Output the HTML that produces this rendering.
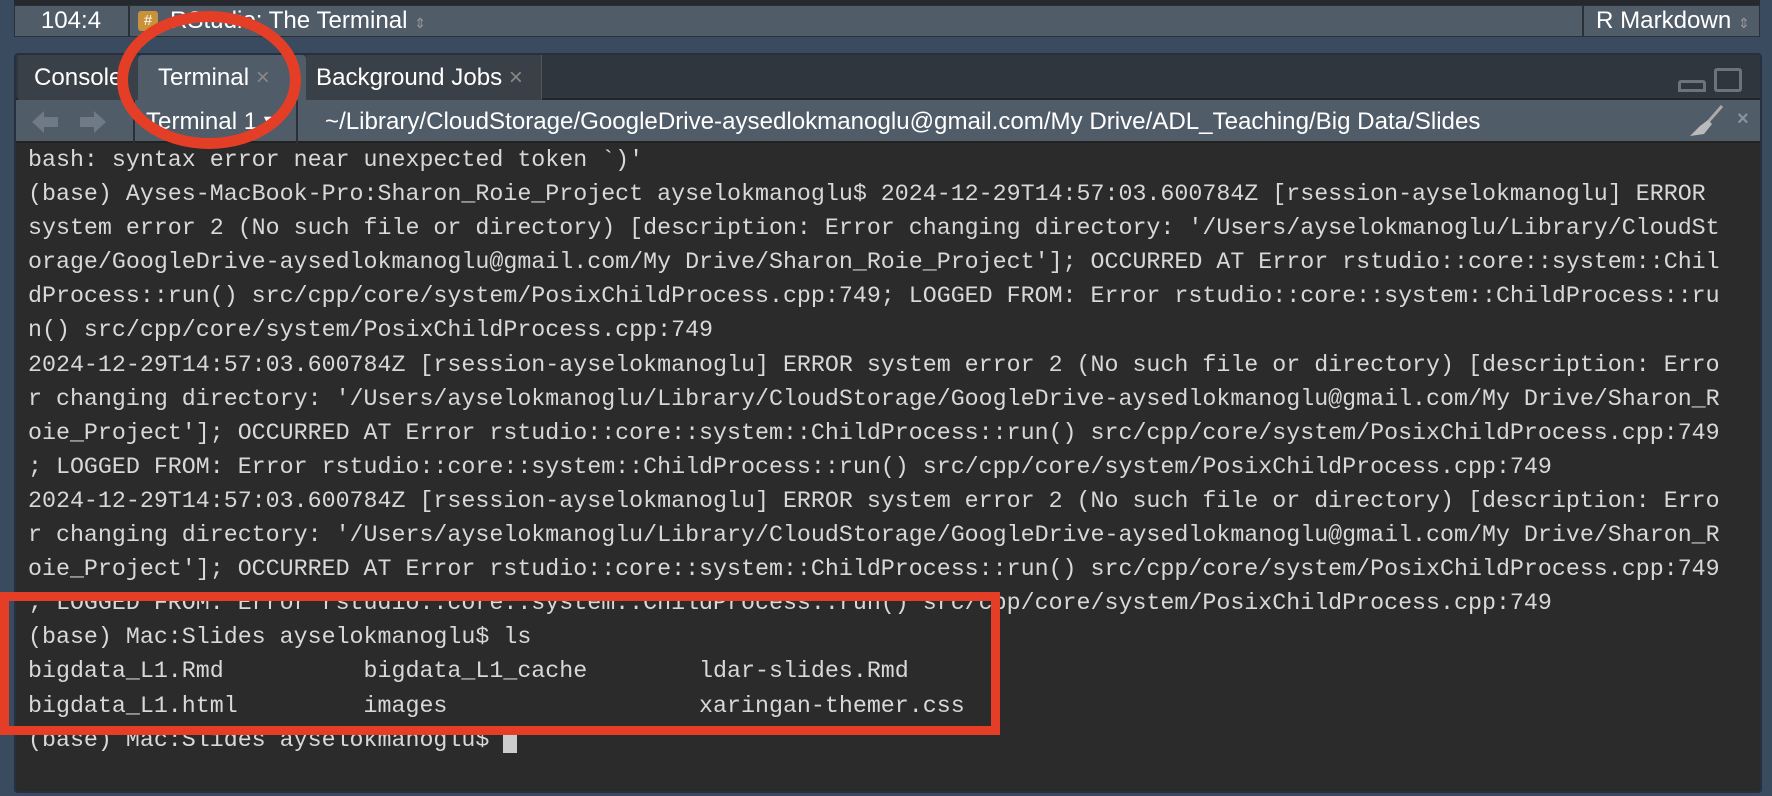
<!DOCTYPE html>
<html><head><meta charset="utf-8"><style>
body{margin:0;width:1772px;height:796px;background:#3a4a5f;position:relative;overflow:hidden;font-family:"Liberation Sans",sans-serif}
div{position:absolute;box-sizing:border-box}
.t{white-space:pre;font-family:"Liberation Mono",monospace;font-size:23.3px;color:#d8d8d8;line-height:34.1px}
.u{font-size:24.1px;color:#fff}
</style></head><body>
<div style="left:14px;top:0;width:1746px;height:5px;background:#262a2f"></div>
<div style="left:14px;top:5px;width:1746px;height:32px;background:#515c69;border:1px solid #2a3038"></div>
<div class="u" style="left:14px;top:5px;width:116px;height:32px;border-right:2px solid #2a3038;text-align:center;line-height:32px">104:4</div>
<div style="left:138px;top:11px;width:20px;height:20px;background:#c8923a;border-radius:3px;color:#fff;font-size:15px;text-align:center;line-height:20px">#</div>
<div class="u" style="left:170px;top:5px;line-height:32px">RStudio: The Terminal <span style="color:#999;font-size:14px">⇕</span></div>
<div class="u" style="left:1582px;top:5px;width:178px;height:32px;border-left:2px solid #2a3038;line-height:32px;padding-left:12px">R Markdown <span style="color:#999;font-size:14px">⇕</span></div>
<div style="left:14px;top:53px;width:1748px;height:740px;background:#2b2b2b;border:2px solid #263040;border-radius:4px"></div>
<div style="left:16px;top:55px;width:1744px;height:45px;background:#30363d;border-bottom:2px solid #1f252b"></div>
<div class="u" style="left:18px;top:55px;width:120px;height:45px;background:#3a4048;line-height:45px;padding-left:16px">Console</div>
<div class="u" style="left:138px;top:55px;width:168px;height:45px;background:#515c69;line-height:45px;padding-left:20px;border-radius:4px 4px 0 0">Terminal <span style="color:#888">×</span></div>
<div class="u" style="left:306px;top:55px;width:236px;height:45px;background:#3a4048;line-height:45px;padding-left:10px;border-right:1px solid #555">Background Jobs <span style="color:#888">×</span></div>
<div style="left:1678px;top:80px;width:28px;height:12px;border:3px solid #6b737c;border-radius:3px 3px 0 0"></div>
<div style="left:1714px;top:68px;width:28px;height:24px;border:3px solid #6b737c;border-radius:3px"></div>
<div style="left:16px;top:100px;width:1744px;height:43px;background:#515c69;border-bottom:2px solid #222"></div>
<svg style="position:absolute;left:30px;top:109px" width="80" height="26"><path d="M2 13 L14 2 L14 8 L28 8 L28 18 L14 18 L14 24Z" fill="#6f7a86"/><path d="M76 13 L64 2 L64 8 L50 8 L50 18 L64 18 L64 24Z" fill="#6f7a86"/></svg>
<div style="left:133px;top:100px;width:2px;height:43px;background:#2a3038"></div>
<div class="u" style="left:142px;top:100px;line-height:43px;padding-left:4px">Terminal 1 ▾</div>
<div style="left:296px;top:100px;width:2px;height:43px;background:#2a3038"></div>
<div class="u" style="left:325px;top:100px;line-height:43px">~/Library/CloudStorage/GoogleDrive-aysedlokmanoglu@gmail.com/My Drive/ADL_Teaching/Big Data/Slides</div>
<svg style="position:absolute;left:1686px;top:104px" width="40" height="36"><line x1="36" y1="2" x2="22" y2="18" stroke="#aaa" stroke-width="3"/><path d="M22 16 L14 22 L4 32 L18 30 L26 20Z" fill="#bbb"/></svg>
<div style="left:1737px;top:108px;color:#8a929a;font-size:20px;font-weight:bold">×</div>
<div class="t" style="left:28px;top:143px">bash: syntax error near unexpected token `)'
(base) Ayses-MacBook-Pro:Sharon_Roie_Project ayselokmanoglu$ 2024-12-29T14:57:03.600784Z [rsession-ayselokmanoglu] ERROR
system error 2 (No such file or directory) [description: Error changing directory: '/Users/ayselokmanoglu/Library/CloudSt
orage/GoogleDrive-aysedlokmanoglu@gmail.com/My Drive/Sharon_Roie_Project']; OCCURRED AT Error rstudio::core::system::Chil
dProcess::run() src/cpp/core/system/PosixChildProcess.cpp:749; LOGGED FROM: Error rstudio::core::system::ChildProcess::ru
n() src/cpp/core/system/PosixChildProcess.cpp:749
2024-12-29T14:57:03.600784Z [rsession-ayselokmanoglu] ERROR system error 2 (No such file or directory) [description: Erro
r changing directory: '/Users/ayselokmanoglu/Library/CloudStorage/GoogleDrive-aysedlokmanoglu@gmail.com/My Drive/Sharon_R
oie_Project']; OCCURRED AT Error rstudio::core::system::ChildProcess::run() src/cpp/core/system/PosixChildProcess.cpp:749
; LOGGED FROM: Error rstudio::core::system::ChildProcess::run() src/cpp/core/system/PosixChildProcess.cpp:749
2024-12-29T14:57:03.600784Z [rsession-ayselokmanoglu] ERROR system error 2 (No such file or directory) [description: Erro
r changing directory: '/Users/ayselokmanoglu/Library/CloudStorage/GoogleDrive-aysedlokmanoglu@gmail.com/My Drive/Sharon_R
oie_Project']; OCCURRED AT Error rstudio::core::system::ChildProcess::run() src/cpp/core/system/PosixChildProcess.cpp:749
; LOGGED FROM: Error rstudio::core::system::ChildProcess::run() src/cpp/core/system/PosixChildProcess.cpp:749
(base) Mac:Slides ayselokmanoglu$ ls
bigdata_L1.Rmd          bigdata_L1_cache        ldar-slides.Rmd
bigdata_L1.html         images                  xaringan-themer.css
(base) Mac:Slides ayselokmanoglu$ <span style="background:#ccc"> </span></div>
<div style="left:0;top:592px;width:1000px;height:143px;border:9px solid #e53e27"></div>
<div style="left:117px;top:11px;width:184px;height:138px;border:11px solid #e53e27;border-radius:50%"></div>
</body></html>
